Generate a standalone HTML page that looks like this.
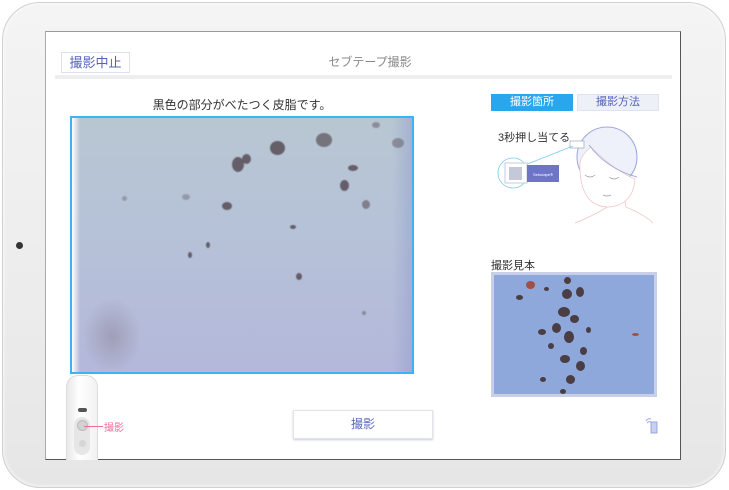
<!DOCTYPE html>
<html><head><meta charset="utf-8"><style>
*{margin:0;padding:0;box-sizing:border-box}
body{width:729px;height:490px;background:#fff;position:relative;overflow:hidden;font-family:"Liberation Sans","Noto Sans CJK JP",sans-serif}
.tab{position:absolute;left:2px;top:2px;width:724px;height:486px;border-radius:38px;background:linear-gradient(180deg,#f4f4f4,#ececec 60%,#e6e6e6);border:1px solid #d0d0d0;box-shadow:inset 0 0 4px #fff}
.scr{position:absolute;left:45px;top:31px;width:636px;height:429px;background:#fff;border:1px solid #555;border-top-color:#999;border-left-color:#aaa}
.a{position:absolute}
.spot{position:absolute;background:#4a3d44;border-radius:50%}
.m .spot{opacity:.75;filter:blur(.4px)}
</style></head><body>
<div class="tab"></div>
<div class="a" style="left:16px;top:242px;width:7px;height:7px;border-radius:50%;background:#333"></div>
<div class="scr"></div>
<div class="a" style="left:61px;top:52px;width:69px;height:21px;border:1px solid #dde0ee;color:#5462b8;font-size:13px;line-height:19px;text-align:center">撮影中止</div>
<div class="a" style="left:290px;top:53px;width:160px;text-align:center;color:#8a8a8a;font-size:12px">セブテープ撮影</div>
<div class="a" style="left:55px;top:75px;width:617px;height:4px;background:#eeeeee"></div>
<div class="a" style="left:70px;top:96px;width:344px;text-align:center;color:#333;font-size:12px">黒色の部分がべたつく皮脂です。</div>
<div class="a m" style="left:70px;top:116px;width:344px;height:258px;border:2px solid #3ab4f2;background:linear-gradient(180deg,#b8c6d2 0%,#b6c2d8 45%,#b4b8da 100%);overflow:hidden">
 <div class="a" style="left:0;top:0;width:8px;height:258px;background:linear-gradient(90deg,#fff,rgba(255,255,255,0))"></div>
 <div class="a" style="left:320px;top:0;width:22px;height:258px;background:linear-gradient(90deg,rgba(150,160,200,0),rgba(140,155,205,.5))"></div>
 <div class="a" style="left:10px;top:180px;width:60px;height:76px;background:radial-gradient(ellipse,rgba(140,130,150,.5),rgba(140,130,150,0) 70%)"></div>
 <div class="spot" style="left:198px;top:23px;width:15px;height:14px"></div>
 <div class="spot" style="left:244px;top:15px;width:16px;height:14px;opacity:.6"></div>
 <div class="spot" style="left:160px;top:39px;width:12px;height:15px"></div>
 <div class="spot" style="left:170px;top:36px;width:9px;height:10px"></div>
 <div class="spot" style="left:268px;top:62px;width:9px;height:11px"></div>
 <div class="spot" style="left:150px;top:84px;width:10px;height:8px"></div>
 <div class="spot" style="left:224px;top:155px;width:6px;height:7px"></div>
 <div class="spot" style="left:276px;top:47px;width:10px;height:6px"></div>
 <div class="spot" style="left:290px;top:82px;width:8px;height:9px;opacity:.5"></div>
 <div class="spot" style="left:218px;top:107px;width:6px;height:4px"></div>
 <div class="spot" style="left:134px;top:124px;width:4px;height:6px"></div>
 <div class="spot" style="left:116px;top:134px;width:4px;height:6px"></div>
 <div class="spot" style="left:320px;top:20px;width:12px;height:10px;opacity:.4"></div>
 <div class="spot" style="left:300px;top:4px;width:8px;height:6px;opacity:.4"></div>
 <div class="spot" style="left:110px;top:76px;width:8px;height:6px;opacity:.3"></div>
 <div class="spot" style="left:50px;top:78px;width:5px;height:5px;opacity:.3"></div>
 <div class="spot" style="left:290px;top:193px;width:4px;height:4px;opacity:.4"></div>
</div>
<div class="a" style="left:491px;top:94px;width:82px;height:17px;background:#2aa6ef;color:#fff;font-size:11px;line-height:17px;text-align:center">撮影箇所</div>
<div class="a" style="left:577px;top:94px;width:82px;height:17px;background:#eef0f8;border:1px solid #dfe3f0;color:#5462b8;font-size:11px;line-height:15px;text-align:center">撮影方法</div>
<div class="a" style="left:498px;top:129px;color:#333;font-size:11px">3秒押し当てる</div>
<svg class="a" style="left:495px;top:115px" width="165" height="110">
 <path d="M80 108 Q100 100 112 92 L112 86 M130 86 L131 92 Q150 100 158 108" fill="none" stroke="#f0c8c8" stroke-width="0.8"/>
 <circle cx="112" cy="42" r="30" fill="#eef0fa" stroke="#9aa8dc" stroke-width="1"/>
 <path d="M85 48 Q84 92 114 92 Q138 90 140 64 Q120 56 96 32 Q86 40 85 48Z" fill="#fff" stroke="#f0c8c8" stroke-width="0.8"/>
 <path d="M94 30 Q112 54 142 62" fill="none" stroke="#9aa8dc" stroke-width="0.9"/>
 <path d="M90 60 Q95 64 100 60 M114 62 Q119 66 124 62 M108 80 Q112 82 116 80" fill="none" stroke="#999" stroke-width="0.7"/>
 <rect x="75" y="26" width="14" height="7" fill="#fff" stroke="#9ab" stroke-width="0.7"/>
 <line x1="30" y1="50" x2="78" y2="31" stroke="#7cc8f0" stroke-width="0.8"/>
 <circle cx="18" cy="58" r="15" fill="none" stroke="#7cc8f0" stroke-width="0.8"/>
 <rect x="10" y="48" width="22" height="20" fill="#fff" stroke="#c6cbe0"/>
 <rect x="14" y="52" width="13" height="13" fill="#c4c8d8"/>
 <rect x="32" y="50" width="32" height="17" fill="#6e75c8"/>
 <text x="38" y="61" font-size="4" fill="#fff" font-family="Liberation Sans">Sebutape®</text>
</svg>
<div class="a" style="left:491px;top:257px;color:#333;font-size:11px">撮影見本</div>
<div class="a" style="left:491px;top:272px;width:166px;height:125px;border:3px solid #c9cfe6;background:#8ea8dc;overflow:hidden">
 <div class="spot" style="left:32px;top:6px;width:9px;height:8px;background:#a05048"></div>
 <div class="spot" style="left:70px;top:2px;width:7px;height:7px"></div>
 <div class="spot" style="left:68px;top:14px;width:10px;height:10px"></div>
 <div class="spot" style="left:82px;top:12px;width:8px;height:10px"></div>
 <div class="spot" style="left:64px;top:32px;width:12px;height:10px"></div>
 <div class="spot" style="left:76px;top:40px;width:9px;height:8px"></div>
 <div class="spot" style="left:58px;top:48px;width:9px;height:10px"></div>
 <div class="spot" style="left:70px;top:56px;width:10px;height:12px"></div>
 <div class="spot" style="left:44px;top:54px;width:8px;height:6px"></div>
 <div class="spot" style="left:66px;top:80px;width:10px;height:8px"></div>
 <div class="spot" style="left:82px;top:86px;width:9px;height:10px"></div>
 <div class="spot" style="left:72px;top:100px;width:9px;height:9px"></div>
 <div class="spot" style="left:86px;top:72px;width:7px;height:8px"></div>
 <div class="spot" style="left:54px;top:68px;width:6px;height:6px"></div>
 <div class="spot" style="left:92px;top:52px;width:5px;height:6px"></div>
 <div class="spot" style="left:46px;top:102px;width:6px;height:5px"></div>
 <div class="spot" style="left:22px;top:20px;width:7px;height:5px"></div>
 <div class="spot" style="left:50px;top:12px;width:5px;height:4px"></div>
 <div class="spot" style="left:66px;top:114px;width:6px;height:5px"></div>
 <div class="spot" style="left:138px;top:58px;width:7px;height:3px;background:#a05048"></div>
</div>
<div class="a" style="left:293px;top:410px;width:140px;height:29px;border:1px solid #e2e4ec;box-shadow:0 1px 2px #ccd;color:#5a6ab8;font-size:12px;line-height:27px;text-align:center">撮影</div>
<div class="a" style="left:66px;top:375px;width:32px;height:85px;border-radius:12px 12px 0 0;background:linear-gradient(90deg,#e8e8e8,#fff 40%,#f2f2f2);border:1px solid #ddd;border-bottom:none"></div>
<div class="a" style="left:74px;top:417px;width:16px;height:38px;border-radius:8px;background:#e6e6e6"></div>
<div class="a" style="left:77px;top:420px;width:11px;height:11px;border-radius:50%;background:#d2d2d2;border:1px solid #bbb"></div>
<div class="a" style="left:79px;top:440px;width:7px;height:7px;border-radius:50%;background:#d6d6d6"></div>
<div class="a" style="left:78px;top:408px;width:9px;height:4px;border-radius:2px;background:#555"></div>
<div class="a" style="left:84px;top:426px;width:19px;height:1px;background:#f06a9a"></div>
<div class="a" style="left:104px;top:419px;color:#f06a9a;font-size:10px">撮影</div>
<svg class="a" style="left:644px;top:417px" width="16" height="18"><path d="M2 4 Q4 1 7 2 M3 6 Q5 4 7 5" stroke="#9aa8dc" fill="none"/><rect x="7" y="5" width="6" height="11" fill="#c8d0ee" stroke="#8a9ad8" stroke-width="0.8"/></svg>
</body></html>
